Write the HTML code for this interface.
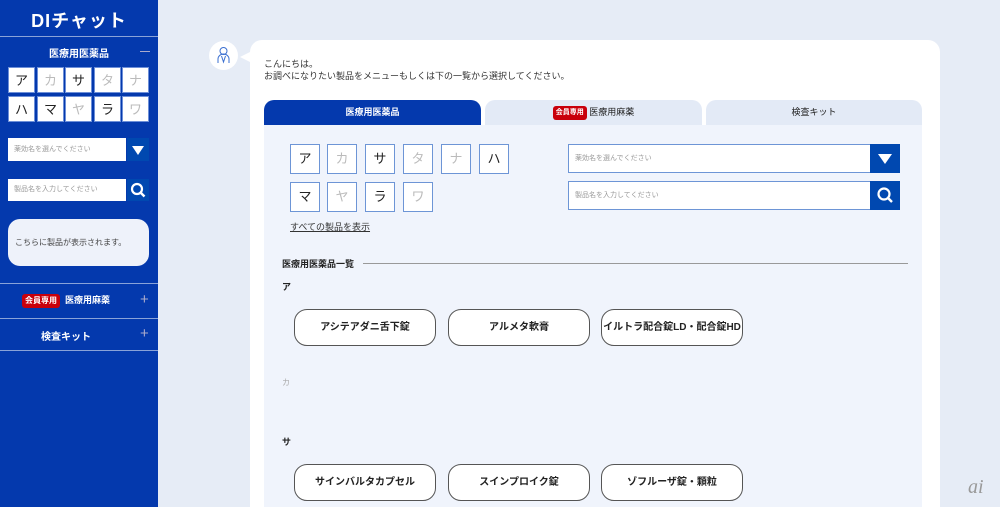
<!DOCTYPE html>
<html><head><meta charset="utf-8"><style>
*{box-sizing:border-box;margin:0;padding:0}
html,body{width:1000px;height:507px;overflow:hidden}
body{background:#e6ecf6;font-family:"Liberation Sans","Noto Sans CJK JP",sans-serif;position:relative;color:#222}
.a{position:absolute}
#sb{left:0;top:0;width:158px;height:507px;background:#0439ad;color:#fff}
.hl{position:absolute;left:0;width:158px;height:1px;background:#8aa3d8}
.k{position:absolute;width:27px;height:26px;background:#fff;border:1px solid #6d8fd8;text-align:center;line-height:25px;font-size:13px;color:#222}
.k.d{color:#bbb}
.mk{position:absolute;width:30px;height:30px;background:#fff;border:1px solid #6d95d6;text-align:center;line-height:28px;font-size:13px;color:#222}
.mk.d{color:#bbb}
.inp{position:absolute;background:#fff;font-size:8px;color:#999;padding-left:6px}
.btn{position:absolute;background:#0048b0}
.pb{position:absolute;width:142px;height:37px;border:1px solid #555;border-radius:13px;background:#fff;text-align:center;line-height:35px;font-size:10px;font-weight:bold;color:#222}
.badge{display:inline-block;background:#c9000b;color:#fff;font-size:8px;line-height:12px;font-weight:bold;padding:1px 3px;border-radius:3px;vertical-align:middle}
</style></head><body>
<div id="sb" class="a">
<div class="a" style="left:0;width:158px;top:7px;text-align:center;font-size:18px;font-weight:bold;letter-spacing:1px">DIチャット</div>
<div class="hl" style="top:36px"></div>
<div class="a" style="left:0;width:158px;top:45px;text-align:center;font-size:10px;font-weight:bold">医療用医薬品</div>
<div class="a" style="left:140px;top:51px;width:10px;height:1px;background:#aac"></div>
<div class="k" style="left:8px;top:67px">ア</div><div class="k d" style="left:37px;top:67px">カ</div><div class="k" style="left:65px;top:67px">サ</div><div class="k d" style="left:94px;top:67px">タ</div><div class="k d" style="left:122px;top:67px">ナ</div>
<div class="k" style="left:8px;top:96px">ハ</div><div class="k" style="left:37px;top:96px">マ</div><div class="k d" style="left:65px;top:96px">ヤ</div><div class="k" style="left:94px;top:96px">ラ</div><div class="k d" style="left:122px;top:96px">ワ</div>
<div class="inp" style="left:8px;top:138px;width:118px;height:23px;line-height:23px;font-size:7px">薬効名を選んでください</div>
<div class="btn" style="left:127px;top:138px;width:22px;height:23px"><svg width="22" height="23"><path d="M5 8h12l-6 9z" fill="#fff"/></svg></div>
<div class="inp" style="left:8px;top:179px;width:118px;height:22px;line-height:22px;font-size:7px">製品名を入力してください</div>
<div class="btn" style="left:127px;top:179px;width:22px;height:22px"><svg width="22" height="22"><circle cx="10" cy="10" r="5" stroke="#fff" stroke-width="2.2" fill="none"/><path d="M13.5 13.5l4 4" stroke="#fff" stroke-width="2.4"/></svg></div>
<div class="a" style="left:8px;top:219px;width:141px;height:47px;background:#eef2fa;border-radius:12px;font-size:8px;color:#444;padding:18px 0 0 7px">こちらに製品が表示されます。</div>
<div class="hl" style="top:283px"></div>
<div class="a" style="left:22px;top:293px;font-size:9px;font-weight:bold;line-height:14px"><span class="badge">会員専用</span>&nbsp;&nbsp;医療用麻薬</div>
<div class="a" style="left:140px;top:291px;font-size:15px;color:#aac;font-weight:300">+</div>
<div class="hl" style="top:318px"></div>
<div class="a" style="left:0;width:132px;top:328px;text-align:center;font-size:10px;font-weight:bold">検査キット</div>
<div class="a" style="left:140px;top:325px;font-size:15px;color:#aac">+</div>
<div class="hl" style="top:350px"></div>
</div>

<div class="a" style="left:209px;top:41px;width:29px;height:29px;border-radius:50%;background:#fff"><svg width="29" height="29"><circle cx="14.5" cy="10" r="3.5" fill="none" stroke="#3a6fd0"/><path d="M9 22v-4a5.5 5 0 0 1 11 0v4M12.5 15l2 6 2-6" fill="none" stroke="#3a6fd0"/></svg></div>
<div class="a" style="left:240px;top:52px;width:0;height:0;border-top:5px solid transparent;border-bottom:5px solid transparent;border-right:10px solid #fff"></div>
<div class="a" style="left:250px;top:40px;width:690px;height:467px;background:#fff;border-radius:12px 12px 0 0"></div>
<div class="a" style="left:264px;top:58px;font-size:9px;line-height:12px;color:#333">こんにちは。<br>お調べになりたい製品をメニューもしくは下の一覧から選択してください。</div>

<div class="a" style="left:264px;top:100px;width:217px;height:25px;background:#0439ad;border-radius:10px 10px 0 0;color:#fff;font-size:9px;font-weight:bold;text-align:center;line-height:25px">医療用医薬品</div>
<div class="a" style="left:485px;top:100px;width:217px;height:25px;background:#e3eaf6;border-radius:10px 10px 0 0;font-size:9px;text-align:center;line-height:25px"><span class="badge" style="font-size:7px">会員専用</span> 医療用麻薬</div>
<div class="a" style="left:706px;top:100px;width:216px;height:25px;background:#e3eaf6;border-radius:10px 10px 0 0;font-size:9px;text-align:center;line-height:25px">検査キット</div>
<div class="a" style="left:264px;top:125px;width:658px;height:382px;background:#f0f4fc"></div>

<div class="mk" style="left:290px;top:144px">ア</div><div class="mk d" style="left:327px;top:144px">カ</div><div class="mk" style="left:365px;top:144px">サ</div><div class="mk d" style="left:403px;top:144px">タ</div><div class="mk d" style="left:441px;top:144px">ナ</div><div class="mk" style="left:479px;top:144px">ハ</div>
<div class="mk" style="left:290px;top:182px">マ</div><div class="mk d" style="left:327px;top:182px">ヤ</div><div class="mk" style="left:365px;top:182px">ラ</div><div class="mk d" style="left:403px;top:182px">ワ</div>
<div class="a" style="left:290px;top:220px;font-size:9px;text-decoration:underline;color:#333">すべての製品を表示</div>

<div class="inp" style="left:568px;top:144px;width:303px;height:29px;line-height:27px;font-size:7px;border:1px solid #6d95d6;border-right:none">薬効名を選んでください</div>
<div class="btn" style="left:870px;top:144px;width:30px;height:29px"><svg width="30" height="29"><path d="M8 10h14l-7 10z" fill="#fff"/></svg></div>
<div class="inp" style="left:568px;top:181px;width:303px;height:29px;line-height:27px;font-size:7px;border:1px solid #6d95d6;border-right:none">製品名を入力してください</div>
<div class="btn" style="left:870px;top:181px;width:30px;height:29px"><svg width="30" height="29"><circle cx="14" cy="13" r="5.5" stroke="#fff" stroke-width="2.2" fill="none"/><path d="M18 17l4 4" stroke="#fff" stroke-width="2.4"/></svg></div>

<div class="a" style="left:282px;top:257px;font-size:9px;font-weight:bold">医療用医薬品一覧</div>
<div class="a" style="left:363px;top:263px;width:545px;height:1px;background:#999"></div>
<div class="a" style="left:282px;top:280px;font-size:9px;font-weight:bold">ア</div>
<div class="pb" style="left:294px;top:309px">アシテアダニ舌下錠</div>
<div class="pb" style="left:448px;top:309px">アルメタ軟膏</div>
<div class="pb" style="left:601px;top:309px">イルトラ配合錠LD・配合錠HD</div>
<div class="a" style="left:282px;top:377px;font-size:8px;color:#aaa">カ</div>
<div class="a" style="left:282px;top:435px;font-size:9px;font-weight:bold">サ</div>
<div class="pb" style="left:294px;top:464px">サインバルタカプセル</div>
<div class="pb" style="left:448px;top:464px">スインプロイク錠</div>
<div class="pb" style="left:601px;top:464px">ゾフルーザ錠・顆粒</div>
<div class="a" style="left:968px;top:476px;font-size:20px;font-style:italic;color:#999;font-family:'Liberation Serif',serif">ai</div>
</body></html>
